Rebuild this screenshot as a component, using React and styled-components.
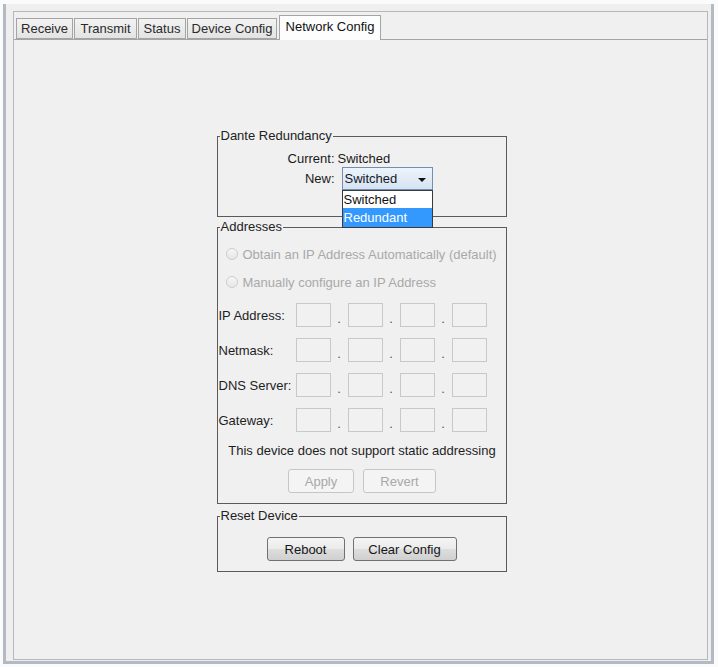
import React from 'react'
import styled, { createGlobalStyle } from 'styled-components'

const GlobalStyle = createGlobalStyle`
  html, body { margin: 0; padding: 0; background: #fbfbfb; }
  body {
    font-family: "Liberation Sans", Arial, sans-serif;
    font-size: 13px;
    color: #1a1a1a;
  }
  * { box-sizing: border-box; }
`

const Screen = styled.div`
  width: 718px;
  height: 667px;
  padding: 4px 4px 3px 3px;
  display: flex;
`

const Frame = styled.div`
  flex: 1;
  display: flex;
  flex-direction: column;
  background: #efefef;
  border: 3px solid #b2bac4;
  border-top: none;
  padding: 7px 3px 1px 7px;
`

const TabControl = styled.div`
  flex: 1;
  display: flex;
  flex-direction: column;
  border: 1px solid #b7b7b7;
  background: #f0f0f0;
`

const TabStrip = styled.div`
  height: 28px;
  display: flex;
  align-items: flex-end;
  padding-left: 2px;
  border-bottom: 1px solid #a4a4a4;
`

const Tab = styled.div`
  width: ${p => p.w}px;
  height: ${p => (p.active ? 25 : 21)}px;
  margin-left: ${p => (p.active ? 2 : 1)}px;
  margin-bottom: ${p => (p.active ? -1 : 0)}px;
  display: flex;
  align-items: center;
  justify-content: center;
  border: 1px solid #a4a4a4;
  border-bottom: ${p => (p.active ? 'none' : '1px solid #a4a4a4')};
  background: ${p => (p.active ? '#fdfdfd' : 'linear-gradient(#f3f3f3, #e3e3e3)')};
  color: ${p => (p.active ? '#111' : '#2a2a2a')};
  padding-bottom: ${p => (p.active ? 3 : 0)}px;
  white-space: nowrap;
  &:first-child { margin-left: 0; }
`

const Panel = styled.div`
  flex: 1;
  display: flex;
  flex-direction: column;
  align-items: center;
  padding: 89px 0 0 2px;
`

const Group = styled.fieldset`
  width: 290px;
  margin: ${p => p.gap || 0}px 0 0;
  padding: 0;
  min-width: 0;
  border: 1px solid #5a5a5a;
  position: relative;
`

const Legend = styled.legend`
  margin-left: 2px;
  padding: 0 1px;
  line-height: 14px;
  color: #222;
`

const RedundancyBody = styled.div`
  display: grid;
  grid-template-columns: 117px auto;
  column-gap: 3px;
  row-gap: 1px;
  align-items: center;
  padding: 9px 0 26px;
`

const Label = styled.div`
  text-align: right;
  line-height: 14px;
`

const Value = styled.div`
  line-height: 14px;
`

const Combo = styled.div`
  position: relative;
  width: 91px;
  height: 23px;
  margin-left: 4px;
  display: flex;
  align-items: center;
  justify-content: space-between;
  padding: 0 6px 0 2px;
  border: 1px solid #6f8fb6;
  background: linear-gradient(#edf3fa, #d6e3f1);
  color: #101828;
`

const Arrow = styled.span`
  width: 0;
  height: 0;
  border-left: 4px solid transparent;
  border-right: 4px solid transparent;
  border-top: 4px solid #111;
  margin-top: 2px;
`

const DropList = styled.div`
  position: absolute;
  left: -1px;
  top: 22px;
  width: 91px;
  border: 1px solid #3a3a3a;
  background: #fff;
  z-index: 5;
`

const DropItem = styled.div`
  height: ${p => p.h}px;
  line-height: ${p => p.h}px;
  padding-left: 1px;
  background: ${p => (p.selected ? '#3399ff' : '#fff')};
  color: ${p => (p.selected ? '#fff' : '#111')};
`

const AddressBody = styled.div`
  display: flex;
  flex-direction: column;
  padding: 12px 0 10px 1px;
`

const RadioRow = styled.div`
  height: 16px;
  display: flex;
  align-items: center;
  gap: 5px;
  padding-left: 7px;
  margin-top: ${p => p.mt || 0}px;
  color: #a9a9a9;
  white-space: nowrap;
`

const RadioDot = styled.span`
  flex: none;
  width: 12px;
  height: 12px;
  border-radius: 50%;
  border: 1px solid #cdcdcd;
  background: linear-gradient(#f6f6f6, #e6e6e6);
`

const IpRow = styled.div`
  height: 24px;
  display: flex;
  align-items: center;
  margin-top: ${p => p.mt}px;
`

const IpLabel = styled.div`
  width: 77px;
  color: #1e1e1e;
  white-space: nowrap;
`

const Octet = styled.div`
  width: 35px;
  height: 24px;
  border: 1px solid #c8c8c8;
  background: #f1f1f1;
`

const Dot = styled.div`
  width: 17px;
  text-align: center;
  padding-top: 6px;
  color: #555;
`

const Note = styled.div`
  margin-top: 12px;
  line-height: 14px;
  text-align: center;
  white-space: nowrap;
  color: #1e1e1e;
`

const ButtonRow = styled.div`
  display: flex;
  justify-content: center;
  gap: ${p => p.gap}px;
  margin-top: ${p => p.mt || 0}px;
`

const Button = styled.button`
  width: ${p => p.w}px;
  height: 24px;
  font: inherit;
  border-radius: 3px;
  border: 1px solid ${p => (p.disabled ? '#c6c6c6' : '#717171')};
  background: ${p =>
    p.disabled
      ? '#f4f4f4'
      : 'linear-gradient(#f4f4f4 0%, #ebebeb 48%, #dddddd 52%, #d0d0d0 100%)'};
  color: ${p => (p.disabled ? '#a8a8a8' : '#161616')};
  padding: 0;
`

const ResetBody = styled.div`
  padding: 14px 0 10px;
`

const tabs = [
  { name: 'Receive', w: 57 },
  { name: 'Transmit', w: 63 },
  { name: 'Status', w: 48 },
  { name: 'Device Config', w: 90 },
  { name: 'Network Config', w: 102, active: true },
]

const ipFields = ['IP Address:', 'Netmask:', 'DNS Server:', 'Gateway:']

function IpField({ label, mt }) {
  return (
    <IpRow mt={mt}>
      <IpLabel>{label}</IpLabel>
      <Octet />
      <Dot>.</Dot>
      <Octet />
      <Dot>.</Dot>
      <Octet />
      <Dot>.</Dot>
      <Octet />
    </IpRow>
  )
}

export default function App() {
  return (
    <Screen>
      <GlobalStyle />
      <Frame>
        <TabControl>
          <TabStrip>
            {tabs.map(t => (
              <Tab key={t.name} w={t.w} active={t.active}>{t.name}</Tab>
            ))}
          </TabStrip>
          <Panel>
            <Group>
              <Legend>Dante Redundancy</Legend>
              <RedundancyBody>
                <Label>Current:</Label>
                <Value>Switched</Value>
                <Label>New:</Label>
                <Combo>
                  <span>Switched</span>
                  <Arrow />
                  <DropList>
                    <DropItem h={17}>Switched</DropItem>
                    <DropItem h={19} selected>Redundant</DropItem>
                  </DropList>
                </Combo>
              </RedundancyBody>
            </Group>

            <Group gap={3}>
              <Legend>Addresses</Legend>
              <AddressBody>
                <RadioRow>
                  <RadioDot />
                  Obtain an IP Address Automatically (default)
                </RadioRow>
                <RadioRow mt={12}>
                  <RadioDot />
                  Manually configure an IP Address
                </RadioRow>
                {ipFields.map((f, i) => (
                  <IpField key={f} label={f} mt={i === 0 ? 13 : 11} />
                ))}
                <Note>This device does not support static addressing</Note>
                <ButtonRow gap={9} mt={11}>
                  <Button w={66} disabled>Apply</Button>
                  <Button w={73} disabled>Revert</Button>
                </ButtonRow>
              </AddressBody>
            </Group>

            <Group gap={5}>
              <Legend>Reset Device</Legend>
              <ResetBody>
                <ButtonRow gap={8}>
                  <Button w={78}>Reboot</Button>
                  <Button w={104}>Clear Config</Button>
                </ButtonRow>
              </ResetBody>
            </Group>
          </Panel>
        </TabControl>
      </Frame>
    </Screen>
  )
}
